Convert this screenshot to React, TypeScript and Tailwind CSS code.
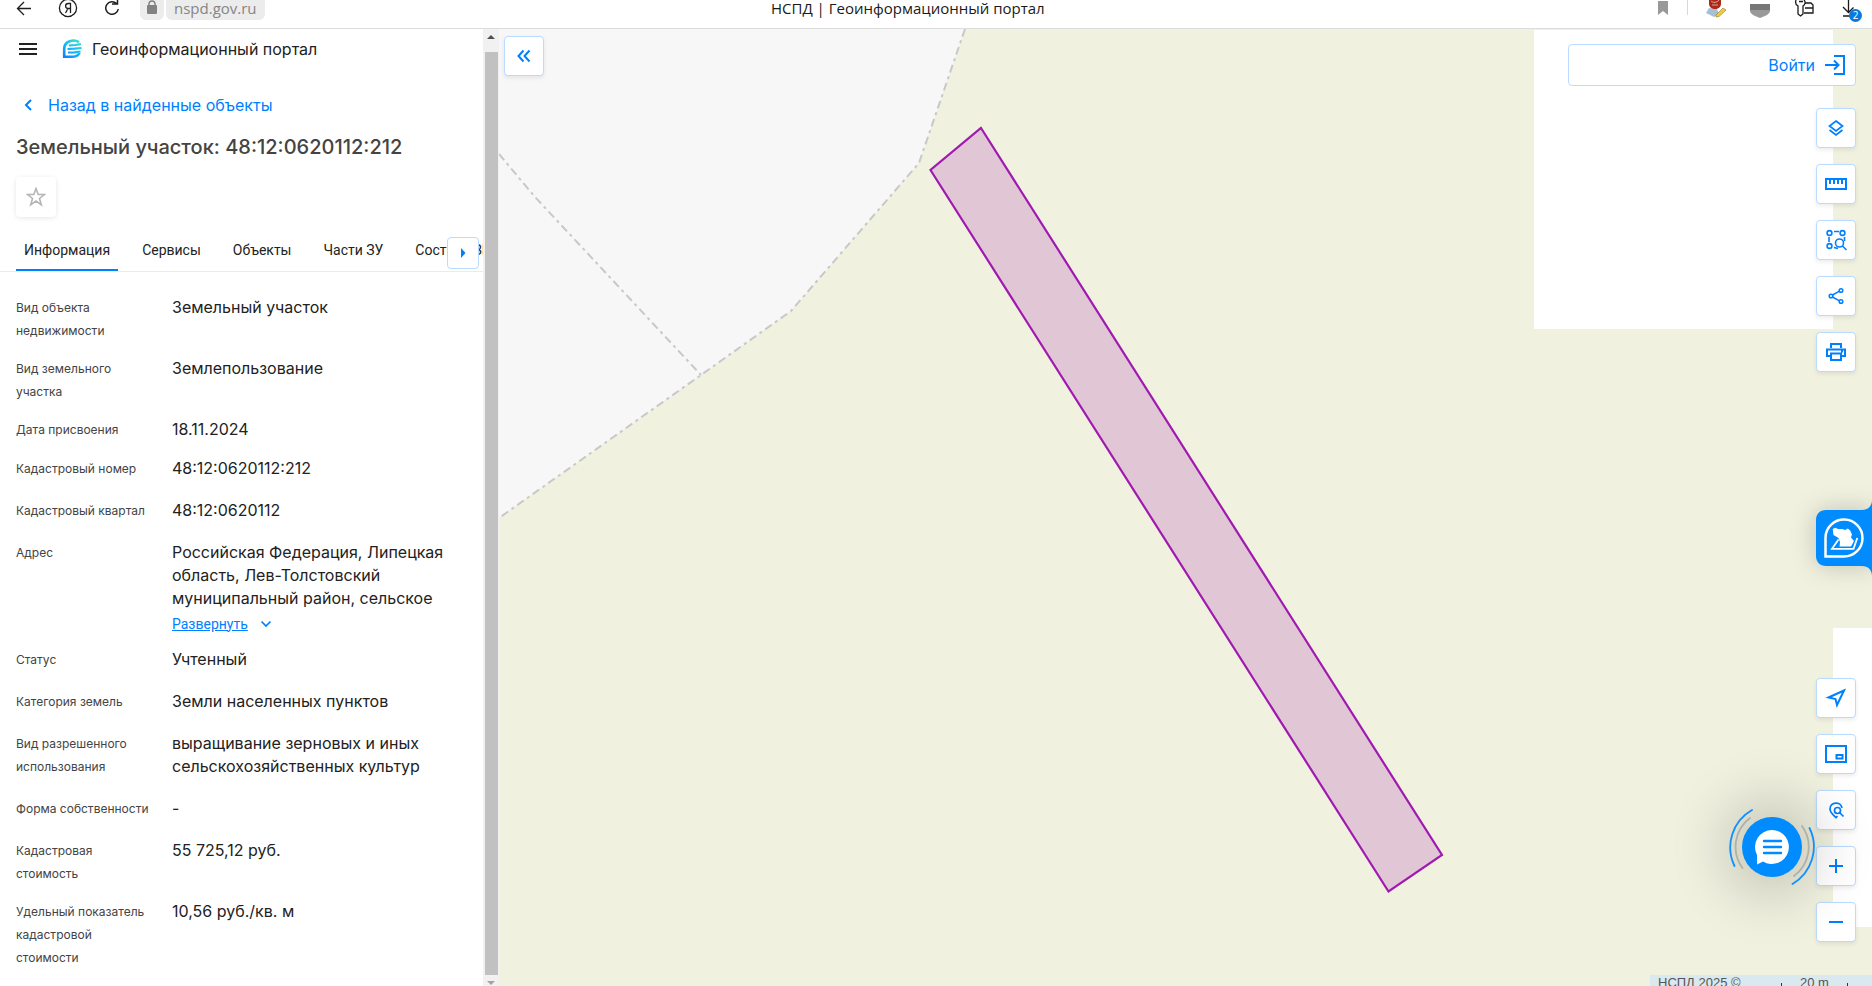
import type { ReactNode } from 'react';
import clsx from 'clsx';

const TABS = ['Информация', 'Сервисы', 'Объекты', 'Части ЗУ', 'Состав ЕЗП'];

const FIELDS = [
  { label: 'Вид объекта недвижимости', value: 'Земельный участок' },
  { label: 'Вид земельного участка', value: 'Землепользование' },
  { label: 'Дата присвоения', value: '18.11.2024', compact: true },
  { label: 'Кадастровый номер', value: '48:12:0620112:212' },
  { label: 'Кадастровый квартал', value: '48:12:0620112' },
  {
    label: 'Адрес',
    value: 'Российская Федерация, Липецкая область, Лев-Толстовский муниципальный район, сельское',
    expandable: true,
  },
  { label: 'Статус', value: 'Учтенный' },
  { label: 'Категория земель', value: 'Земли населенных пунктов' },
  { label: 'Вид разрешенного использования', value: 'выращивание зерновых и иных сельскохозяйственных культур' },
  { label: 'Форма собственности', value: '-' },
  { label: 'Кадастровая стоимость', value: '55 725,12 руб.' },
  { label: 'Удельный показатель кадастровой стоимости', value: '10,56 руб./кв. м' },
];

function BrowserBar() {
  return (
    <div className="relative flex h-[29px] shrink-0 items-start justify-between border-b border-[#dcdcdc] bg-white font-['Open_Sans',sans-serif]">
      <div className="flex h-5 items-start pl-4">
        <button aria-label="Назад" className="w-[42px]">
          <svg width="18" height="18" viewBox="0 0 18 18" fill="none" stroke="#1f1f1f" strokeWidth="1.3">
            <path d="M15 8.5H2M8 2L1.5 8.5 8 15" />
          </svg>
        </button>
        <button aria-label="Яндекс" className="w-[45px]">
          <svg width="20" height="18" viewBox="0 0 20 18" fill="none" stroke="#1f1f1f" strokeWidth="1.3">
            <circle cx="10" cy="8" r="8.6" />
            <path d="M12.5 13V3.5h-2.2c-3.6 0-3.6 5 0 5h2.2M10 8.5L7.5 13" />
          </svg>
        </button>
        <button aria-label="Обновить" className="w-[37px]">
          <svg width="18" height="18" viewBox="0 0 18 18" fill="none" stroke="#1f1f1f" strokeWidth="1.5">
            <path d="M13.5 3.5A6.3 6.3 0 1 0 15.3 9M9 4h5.5V-2" />
          </svg>
        </button>
        <div className="flex h-5 w-6 items-start justify-center rounded-b-md bg-[#ececec]">
          <svg width="12" height="16" viewBox="0 0 12 16">
            <path d="M3 6V4a3 3 0 0 1 6 0v2" fill="none" stroke="#828282" strokeWidth="1.4" />
            <rect x="1" y="5" width="10" height="9" rx="1" fill="#828282" />
          </svg>
        </div>
        <div className="ml-0.5 h-5 rounded-b-md bg-[#ececec] px-2 text-[15px] leading-4 text-[#858585]">nspd.gov.ru</div>
      </div>
      <div className="absolute left-1/2 top-0 -translate-x-[165px] whitespace-nowrap text-[15px] leading-4 text-[#1a1a1a]">
        НСПД | Геоинформационный портал
      </div>
      <svg className="shrink-0" width="216" height="28" viewBox="1656 0 216 28">
        <path d="M1658 1h10v14l-5-4-5 4z" fill="#999" />
        <path d="M1687.500 0v15" stroke="#d8d8d8" />
        <path d="M1706 13l3-5 8 1 2 5-5 3-4-2z" fill="#a9bfd8" />
        <path d="M1709 0h12v4c0 3-3 5-6 5s-6-2-6-5z" fill="#a92a1b" />
        <path d="M1711 1c2 2 6 2 8-1M1712 5h6" stroke="#e8a08e" fill="none" />
        <path d="M1716 15l7-7 3 2-7 6.500-3 .5z" fill="#f0cc38" stroke="#8b7a2c" strokeWidth=".6" />
        <path d="M1750 4h20v7c0 3-5 5-10 7-5-2-10-4-10-7z" fill="#999" />
        <path d="M1750 4h20v6h-20z" fill="#777" />
        <g fill="none" stroke="#1a1a1a" strokeWidth="1.3">
          <path d="M1796 0c-1 3 0 5 2 6v8l2.500 2 2.500-2V6c2-1 3-4 1-6M1799 1.500h4" />
          <path d="M1805 3h6l2 2v8h-9M1805 8h8" />
          <path d="M1848.500 0v12M1843 7l5.500 5.500 5-5M1843 16h8" />
        </g>
        <circle cx="1855.500" cy="15.500" r="6.500" fill="#0b79dc" />
        <text x="1855.500" y="19" fontSize="10" fill="#fff" textAnchor="middle">2</text>
      </svg>
    </div>
  );
}

function Logo() {
  return (
    <svg width="20" height="20" viewBox="0 0 20 20" className="shrink-0">
      <defs>
        <linearGradient id="logo" gradientUnits="userSpaceOnUse" x1="17" y1="1" x2="3" y2="19">
          <stop offset="0" stopColor="#35e6c5" />
          <stop offset=".5" stopColor="#12b8fa" />
          <stop offset="1" stopColor="#0a80ff" />
        </linearGradient>
      </defs>
      <g fill="none" stroke="url(#logo)">
        <path d="M17 3.200C12 0 2.200 1.500 2.200 10v7.800h7.500c3.500 0 6.500-1.500 8-4" strokeWidth="2.600" />
        <path d="M7 6.500l6-.5 6-.8M5.500 10l7-.3 7-.7M6 13.500l6.500-.2 6-.8" strokeWidth="2.200" />
      </g>
    </svg>
  );
}

function Tabs() {
  return (
    <div className="relative">
      <div role="tablist" className="flex gap-4 overflow-hidden border-b border-[#ebebeb] pl-4">
        {TABS.map((tab, i) => (
          <button
            key={tab}
            role="tab"
            aria-selected={i === 0}
            className={clsx(
              "h-10 shrink-0 border-b-2 px-2 font-['Roboto',sans-serif] text-sm leading-5 text-[#222]",
              i === 0 ? 'border-[#007fff]' : 'border-transparent',
            )}
          >
            {tab}
          </button>
        ))}
      </div>
      <button
        aria-label="Следующие вкладки"
        className="absolute right-1 top-1.5 flex h-8 w-8 items-center justify-center rounded border border-[#b9dbff] bg-white"
      >
        <svg width="8" height="10" viewBox="0 0 8 10" fill="#007fff">
          <path d="M2 0l4.500 5L2 10z" />
        </svg>
      </button>
    </div>
  );
}

function Sidebar() {
  return (
    <aside className="flex w-[483px] shrink-0 flex-col overflow-hidden bg-white">
      <header className="flex h-10 items-center pl-[19px]">
        <button aria-label="Меню" className="flex w-[43px] flex-col gap-[3px]">
          <span className="h-0.5 w-[18px] bg-[#222]" />
          <span className="h-0.5 w-[18px] bg-[#222]" />
          <span className="h-0.5 w-[18px] bg-[#222]" />
        </button>
        <Logo />
        <span className="ml-2.5 text-base text-[#222]">Геоинформационный портал</span>
      </header>

      <a href="#" className="mt-6 flex h-6 items-center pl-6 text-base text-[#007fff]">
        <svg width="24" height="12" viewBox="0 0 24 12" fill="none" stroke="#007fff" strokeWidth="2">
          <path d="M7 1L2 6l5 5" />
        </svg>
        Назад в найденные объекты
      </a>
      <h1 className="mt-4 pl-4 text-xl leading-7 font-medium text-[#444]">Земельный участок: 48:12:0620112:212</h1>

      <button
        aria-label="В избранное"
        className="mt-4 ml-4 flex h-10 w-10 items-center justify-center rounded bg-white shadow-[0_1px_5px_rgba(0,0,0,0.1)]"
      >
        <svg width="20" height="20" viewBox="0 0 20 20" fill="none" stroke="#b5b5b5" strokeWidth="1.600">
          <path d="M10 1.500l2.200 6h6.300l-5 4 1.800 6.300L10 14l-5.300 3.800 1.800-6.300-5-4h6.300z" />
        </svg>
      </button>

      <div className="mt-3.5">
        <Tabs />
      </div>

      <dl className="flex flex-col gap-[15px] pt-6 pl-4">
        {FIELDS.map((f) => (
          <div key={f.label} className="flex">
            <dt className="w-[156px] shrink-0 pr-4 text-xs leading-[23px] text-[#444]">{f.label}</dt>
            <dd
              className={clsx(
                'w-[280px] text-base leading-[23px] text-[#222]',
                f.compact && 'pb-px',
                !f.compact && !f.expandable && 'pb-1',
              )}
            >
              {f.value}
              {f.expandable && (
                <button className="mt-1 flex h-[19px] items-center gap-3 font-['Roboto',sans-serif] text-sm leading-5 text-[#007fff]">
                  <span className="underline">Развернуть</span>
                  <svg width="12" height="8" viewBox="0 0 12 8" fill="none" stroke="#007fff" strokeWidth="1.700">
                    <path d="M1.500 1.500L6 6l4.500-4.500" />
                  </svg>
                </button>
              )}
            </dd>
          </div>
        ))}
      </dl>
    </aside>
  );
}

function ScrollTrack() {
  return (
    <div className="flex w-4 shrink-0 flex-col items-center bg-[#f1f1f1]">
      <svg width="8" height="23" viewBox="0 0 8 23" fill="#505050">
        <path d="M0 10l4-4 4 4z" />
      </svg>
      <div className="w-[13px] flex-1 bg-[#c1c1c1]" />
      <svg width="8" height="11" viewBox="0 0 8 11" fill="#a3a3a3">
        <path d="M0 6l4 4 4-4z" />
      </svg>
    </div>
  );
}

function MapCanvas() {
  return (
    <svg
      className="absolute inset-0 h-full w-full"
      viewBox="499 29 1373 957"
      preserveAspectRatio="xMidYMid slice"
    >
      <rect x="499" y="29" width="1373" height="957" fill="#f0f1df" />
      <path d="M499 29H965L919 163 791 311 701 375 499 518z" fill="#f7f7f7" />
      <g fill="none" stroke="#c8c8c8" strokeWidth="2" strokeDasharray="8 4 3 4">
        <path d="M965 29L919 163 791 311 701 375 499 518" />
        <path d="M499 154L535 197 701 375" />
      </g>
      <path d="M1534 30h299v299h-299zM1833 628h39v299h-39z" fill="#fff" />
      <path d="M981 128L1442 855 1388.500 891.500 930.500 170z" fill="#e1c7d6" stroke="#a019b0" strokeWidth="2.200" />
    </svg>
  );
}

function ToolButton({ label, children }: { label: string; children: ReactNode }) {
  return (
    <button
      aria-label={label}
      className="flex h-10 w-10 items-center justify-center rounded border border-[#b9dbff] bg-white shadow-[0_2px_4px_rgba(0,0,0,0.08)]"
    >
      <svg width="24" height="24" viewBox="0 0 24 24" fill="none" stroke="#007fff" strokeWidth="2">
        {children}
      </svg>
    </button>
  );
}

function AssistantTab() {
  return (
    <button aria-label="Помощник" className="absolute right-0 top-[471px] h-[76px] w-14 drop-shadow-[0_0_12px_rgba(0,0,0,0.2)]">
      <svg width="56" height="76" viewBox="0 0 56 76">
        <path d="M56 0c0 6-4 10-10 10H10C4 10 0 14 0 20v36c0 6 4 10 10 10h36c6 0 10 4 10 10z" fill="#008cff" />
        <path d="M9.500 56.500V37.500a18.500 18.500 0 1 1 18.500 19z" fill="none" stroke="#fff" strokeWidth="2.500" />
        <path
          d="M16.700 29l2.500-1.200 3 1.200h4l3 1 2.500-1.500 2.500 2 1.800 4-1 3 3 3.500-3 5.500H23.500l.5-4.500-1.500-4-5-3z"
          fill="#fff"
        />
        <path d="M22.500 39.500l-6.500 9.300h21.500L41.300 38" fill="none" stroke="#fff" strokeWidth="1.800" />
      </svg>
    </button>
  );
}

function ChatButton() {
  return (
    <button aria-label="Чат" className="absolute right-[55px] bottom-[94px] flex h-[90px] w-[90px] items-center justify-center rounded-full">
      <span className="h-[60px] w-[60px] rounded-full bg-[#008cff] shadow-[0_0_60px_16px_rgba(0,0,0,0.2)]" />
      <svg className="absolute inset-0" width="90" height="90" viewBox="-45 -45 90 90">
        <path d="M0-17a17 17 0 1 1-9 31.500l-6 3V8A17 17 0 0 1 0-17z" fill="#fff" />
        <path d="M-8-6H9M-8 0H9M-8 6H9" stroke="#008cff" strokeWidth="2.400" strokeLinecap="round" />
        <g fill="none" strokeWidth="1.800" strokeLinecap="round">
          <path d="M-20-37A43 43 0 0 0-37.500 19M37.500-19A43 43 0 0 1 20.500 37" stroke="#108fff" />
          <path d="M-22-29A36 36 0 0 0-29.500 21M30-21A36 36 0 0 1 22 29" stroke="#b0b0aa" />
        </g>
      </svg>
    </button>
  );
}

function MapPane() {
  return (
    <main className="relative flex min-w-0 flex-1 justify-between overflow-hidden">
      <MapCanvas />
      <div className="relative pt-[7px] pl-[5px]">
        <ToolButton label="Свернуть панель">
          <path d="M11.500 6.500L6.500 12l5 5.500M17.500 6.500l-5 5.500 5 5.500" />
        </ToolButton>
      </div>

      <div className="relative flex flex-col items-end pt-[15px] pr-4 pb-11">
        <button className="flex h-[42px] w-72 items-center justify-end gap-2.5 rounded border border-[#b9dbff] bg-white pr-2.5 text-base text-[#007fff]">
          Войти
          <svg width="20" height="20" viewBox="0 0 20 20" fill="none" stroke="#007fff" strokeWidth="2">
            <path d="M10 2V1h9v18h-9v-1M0 10h13M9 5.500l4.500 4.500L9 14.500" />
          </svg>
        </button>
        <div className="mt-[22px] flex flex-col gap-4">
          <ToolButton label="Слои">
            <path d="M12 5l6.500 5L12 15 5.500 10zM5.500 14l6.500 5 6.500-5" strokeWidth="1.700" />
          </ToolButton>
          <ToolButton label="Линейка">
            <path d="M2 7h20v10H2zM6 7v5M10 7v5M14 7v5M18 7v5" />
          </ToolButton>
          <ToolButton label="Поиск в области">
            <g strokeWidth="1.600">
              <circle cx="5.500" cy="5" r="2.400" />
              <circle cx="18.500" cy="5" r="2.400" />
              <circle cx="5.500" cy="18" r="2.400" />
              <circle cx="15.500" cy="15" r="4" />
              <path d="M10 3.500h5M5 9v5M20.500 9v4M10 19.500l4 1M18.500 18l4 4" />
            </g>
          </ToolButton>
          <ToolButton label="Поделиться">
            <g strokeWidth="1.500">
              <circle cx="7" cy="12" r="1.800" />
              <circle cx="17" cy="6.500" r="1.800" />
              <circle cx="17" cy="17.500" r="1.800" />
              <path d="M8.500 11L15.500 7.200M8.500 13l7 3.800" />
            </g>
          </ToolButton>
          <ToolButton label="Печать">
            <path d="M7 8V4h10v4M7 16H3V9.500h18V16h-4M7 13.500h10V20H7zM17 11.500h2" />
          </ToolButton>
        </div>
        <div className="mt-auto flex flex-col gap-4">
          <ToolButton label="Моё местоположение">
            <path d="M20 4.500L4.500 11.500l7 1.500 1.500 6z" />
          </ToolButton>
          <ToolButton label="Обзорная карта">
            <path d="M2 4h20v16H2zM12.500 13h6v3.500h-6z" />
          </ToolButton>
          <ToolButton label="Поиск на карте">
            <g strokeWidth="1.700">
              <path d="M18 10c-1-7-12-6.500-12 1 0 3 3 6 6 8.500l1.500-1.500" />
              <circle cx="13.500" cy="12.500" r="3" />
              <path d="M15.500 14.500l4 4" />
            </g>
          </ToolButton>
          <ToolButton label="Приблизить">
            <path d="M12 5v14M5 12h14" />
          </ToolButton>
          <ToolButton label="Отдалить">
            <path d="M5 12h14" />
          </ToolButton>
        </div>
      </div>
      <AssistantTab />
      <ChatButton />

      {/* attribution and scale run past the bottom edge */}
      <footer className="absolute right-0 -bottom-3 flex h-[23px] w-[222px] items-start bg-[#d9e9ef] pl-2 font-['Liberation_Sans',sans-serif] text-[13px] leading-4 text-[#555]">
        <span className="w-[123px]">НСПД 2025 ©</span>
        <span className="mt-2 h-4 w-[67px] border-x border-[#333] text-center">
          <span className="relative -top-2">20 m</span>
        </span>
      </footer>
    </main>
  );
}

export default function App() {
  return (
    <div className="flex h-screen flex-col overflow-hidden bg-white font-['Inter',sans-serif]">
      <BrowserBar />
      <div className="flex min-h-0 flex-1">
        <Sidebar />
        <ScrollTrack />
        <MapPane />
      </div>
    </div>
  );
}
